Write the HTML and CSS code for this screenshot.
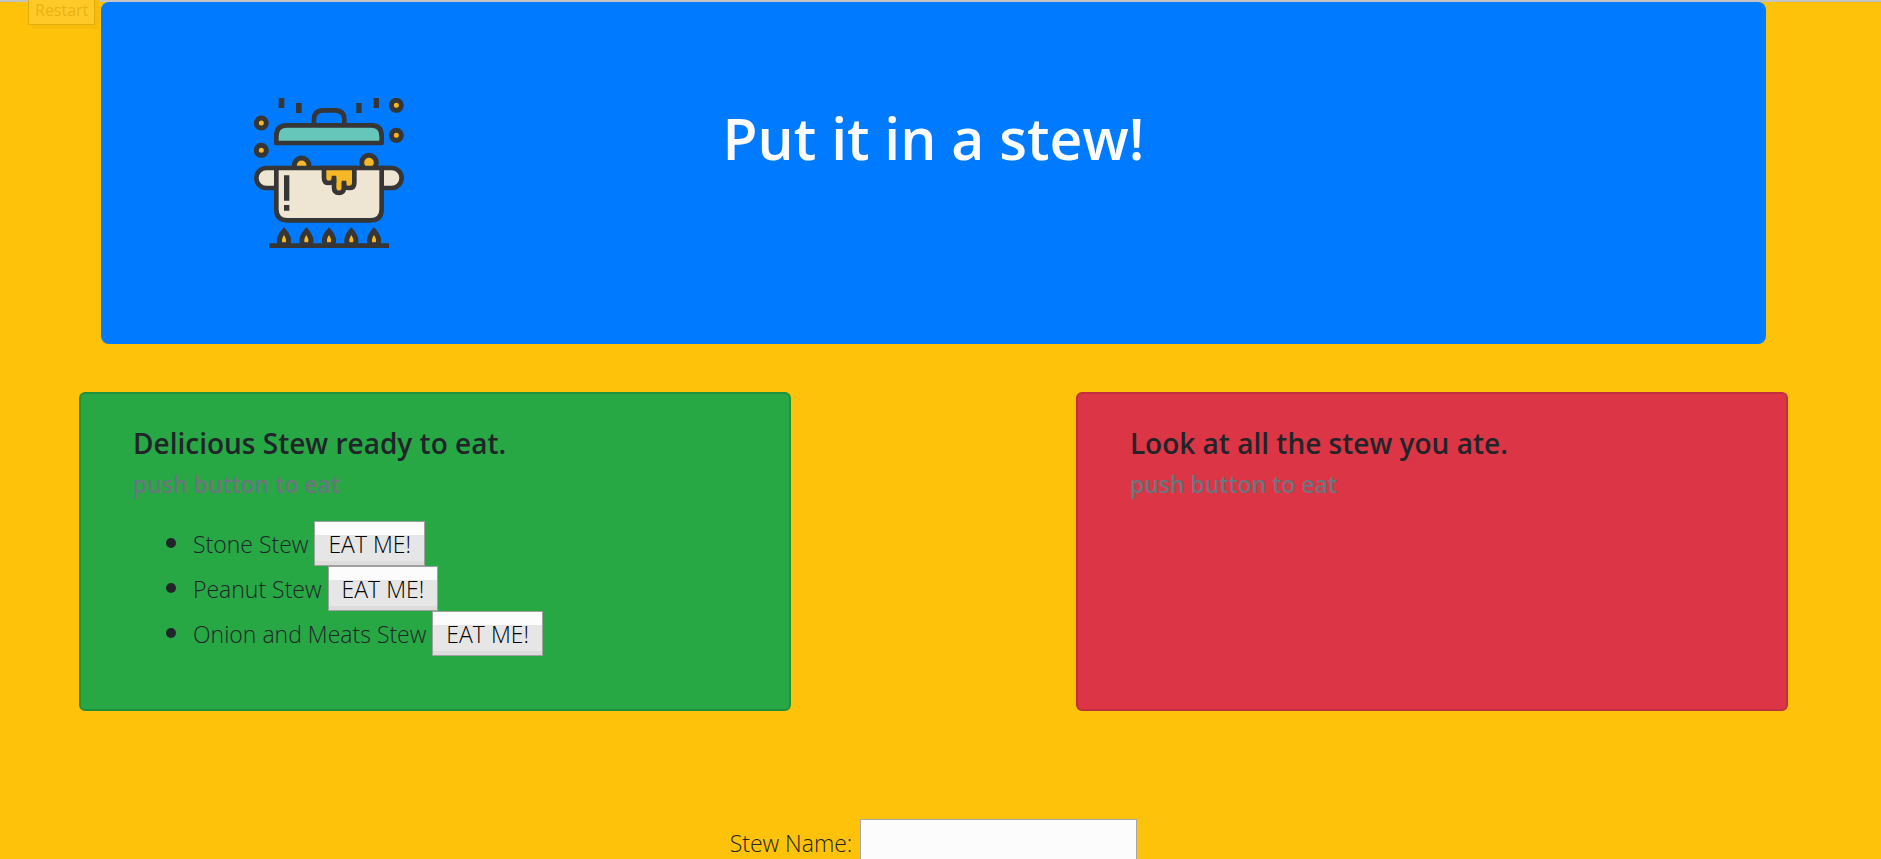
FILE: index.html
```html
<!DOCTYPE html>
<html lang="en">
<head>
<meta charset="utf-8">
<title>Put it in a stew!</title>
<link rel="stylesheet" href="styles.css">
</head>
<body>
<button class="restart" type="button">Restart</button>
<main class="page">
  <header class="hero">
    <svg class="pot" viewBox="39 39 450 450" fill="none" stroke="#363636" stroke-width="14" aria-hidden="true">
      <g fill="#363636" stroke="none">
        <path d="M113 39h17v30h-17zM165 54h17v30h-17zM346 54h16v30h-16zM398 39h16v30h-16z"/>
      </g>
      <g fill="#f6b827" stroke-width="15">
        <circle cx="61" cy="114" r="15"/><circle cx="61" cy="196" r="15"/>
        <circle cx="466" cy="61" r="15"/><circle cx="466" cy="151" r="15"/>
        <circle cx="182" cy="241" r="22"/><circle cx="384" cy="233" r="22"/>
      </g>
      <path d="M219 121V104Q219 76 247 76H282Q310 76 310 104V121"/>
      <path d="M106 174V153Q106 121 138 121H390Q422 121 422 153V174Z" fill="#66c6b9" stroke-linejoin="round"/>
      <path d="M106 249H76A30 30 0 0 0 76 309H106M422 249H452A30 30 0 0 1 452 309H422" fill="#eee5d3"/>
      <path d="M106 249H422V373Q422 406 389 406H139Q106 406 106 373Z" fill="#eee5d3"/>
      <path d="M249 249V278Q249 294 264 294Q279 294 279 280V307Q279 324 294 324Q309 324 309 307V294V302Q311 309 324 309Q340 309 340 293V249Z" fill="#f6b827"/>
      <path d="M279 294V272M309 307V287"/>
      <path d="M137 271V347M137 360V377" stroke-width="16"/>
      <path d="M84 482H444" stroke-width="15"/>
      <g fill="#f6b827" stroke-width="15">
        <path id="flame" d="M118 479C111 464 119 449 129 438C139 449 147 464 140 479Z"/>
        <use href="#flame" x="67"/><use href="#flame" x="135"/><use href="#flame" x="202"/><use href="#flame" x="270"/>
      </g>
    </svg>
    <h1 class="hero-title">Put it in a stew!</h1>
  </header>

  <div class="cards">
    <section class="card card-ready">
      <h2 class="card-title">Delicious Stew ready to eat.</h2>
      <h3 class="card-subtitle">push button to eat</h3>
      <ul class="stews">
        <li>Stone Stew <button class="eat" type="button">EAT ME!</button></li>
        <li>Peanut Stew <button class="eat" type="button">EAT ME!</button></li>
        <li>Onion and Meats Stew <button class="eat" type="button">EAT ME!</button></li>
      </ul>
    </section>
    <section class="card card-eaten">
      <h2 class="card-title">Look at all the stew you ate.</h2>
      <h3 class="card-subtitle">push button to eat</h3>
    </section>
  </div>

  <form class="stew-form">
    <label for="stew-name">Stew Name:</label>
    <input class="stew-input" id="stew-name" type="text">
  </form>
</main>
</body>
</html>
```
FILE: styles.css
```css
* {
  box-sizing: border-box;
}

html {
  background: #ffc20a;
  scrollbar-width: none;
}

body {
  margin: 0;
  border-top: 2px solid #c4c4c4;
  color: #212529;
  font-family: "Open Sans", "Noto Sans", sans-serif;
  font-size: 23px;
  font-weight: 300;
  line-height: 36px;
}

.page {
  padding: 0 93px 0 79px;
}

.restart {
  position: absolute;
  top: -6px;
  left: 28px;
  height: 31px;
  padding: 0 6px;
  border: 1px solid #e3ad10;
  background: #ffc928;
  box-shadow: 4px 4px 0 #f8bb08;
  color: #e9b213;
  font: 400 16px/24px "Open Sans", sans-serif;
}

.hero {
  display: grid;
  grid-template-columns: 1fr 2fr 1fr;
  margin: 0 22px 48px;
  padding: 96px 26px;
  border-radius: 8px;
  background: #007bff;
}

.pot {
  width: 150px;
  height: 150px;
  justify-self: center;
}

.hero-title {
  margin: 0;
  color: #fcfcfc;
  font-size: 57px;
  font-weight: 600;
  line-height: 80px;
  text-align: center;
}

.cards {
  display: grid;
  grid-template-columns: 5fr 5fr;
  column-gap: 16.6667%;
}

.card {
  padding: 30px 52px;
  border: 2px solid;
  border-radius: 6px;
}

.card-ready {
  border-color: #22913c;
  background: #28a745;
}

.card-eaten {
  border-color: #c12e3e;
  background: #dc3545;
}

.card-title {
  margin: 0 0 8px;
  font-size: 28px;
  font-weight: 600;
  line-height: 38px;
}

.card-subtitle {
  margin: 0 0 22px;
  color: #6c757d;
  font-size: 23px;
  font-weight: 600;
  line-height: 29px;
}

.stews {
  margin: 0 0 23px;
  padding-left: 60px;
}

.stews li {
  height: 45px;
}

.stews li::marker {
  font-size: 28px;
}

.eat {
  height: 45px;
  padding: 0 13px;
  border: 1px solid #a0a0a0;
  background: linear-gradient(#fcfcfc 13px, #e6e6e6 13px 39px, #dcdcdc 39px);
  color: #000;
  font: inherit;
}

.stew-form {
  display: flex;
  justify-content: center;
  align-items: center;
  gap: 8px;
  margin-top: 108px;
}

.stew-input {
  width: 277px;
  height: 48px;
  padding: 2px 6px;
  border: 1px solid #a9a9a9;
  background: #fcfcfc;
  font: inherit;
}
```
